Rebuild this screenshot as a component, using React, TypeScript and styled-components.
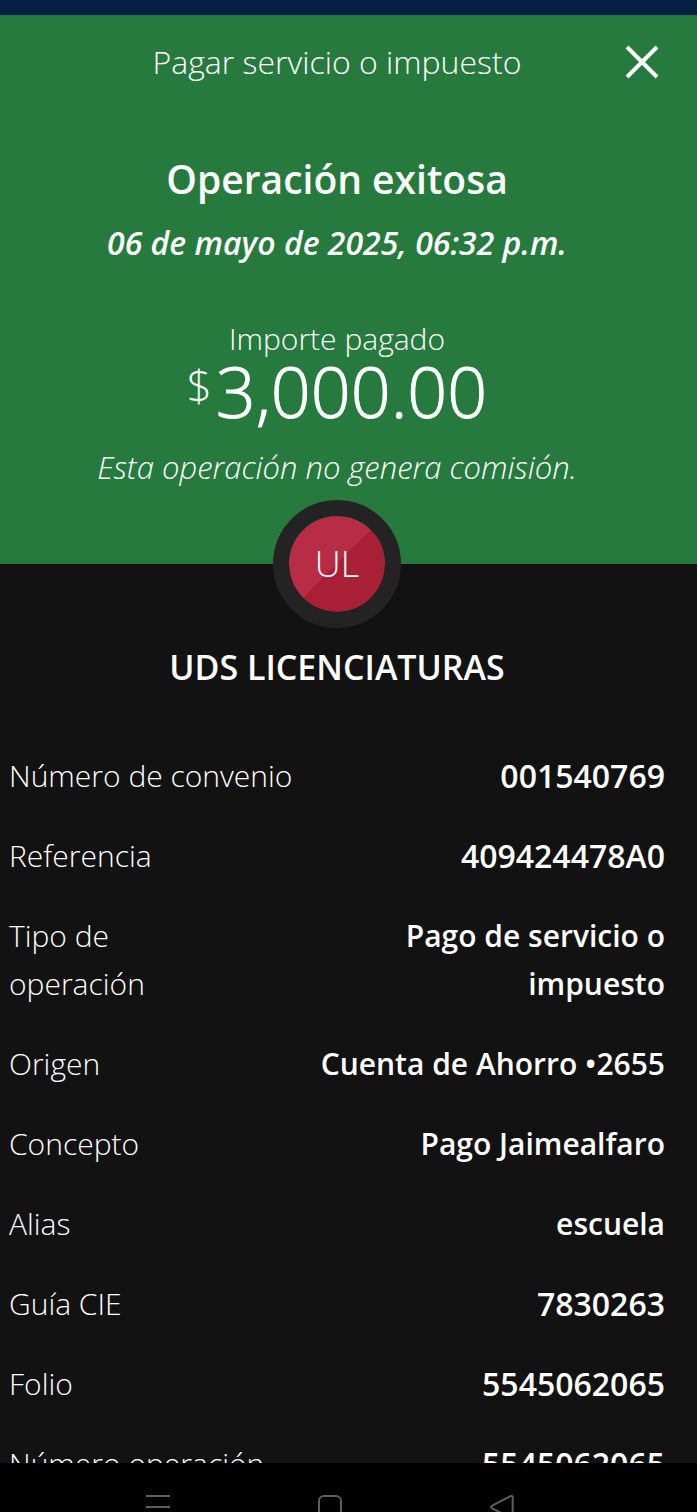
import React from 'react';
import styled, { createGlobalStyle } from 'styled-components';

const GlobalStyle = createGlobalStyle`
  *, *::before, *::after { box-sizing: border-box; }
  body {
    margin: 0;
    background: #121212;
    color: #ffffff;
    font-family: 'Open Sans', 'Noto Sans', sans-serif;
    font-weight: 300;
  }
  button { font: inherit; color: inherit; background: none; border: 0; padding: 0; cursor: pointer; }
  h1, h2, h3, p, dl, dd { margin: 0; }
`;

const Screen = styled.div`
  display: flex;
  flex-direction: column;
  height: 100vh;
`;

const StatusStrip = styled.div`
  flex: none;
  height: 15px;
  background: #062045;
`;

const Content = styled.main`
  flex: 1;
  min-height: 0;
  overflow-y: auto;
  scrollbar-width: none;
`;

const Hero = styled.section`
  display: flex;
  flex-direction: column;
  align-items: center;
  padding: 0 32px 0 9px;
  background: #277a3e;
  text-align: center;
`;

const TopBar = styled.header`
  display: grid;
  grid-template-columns: 46px 1fr 46px;
  align-items: center;
  align-self: stretch;
  height: 94px;
`;

const Title = styled.h1`
  grid-column: 2;
  font-size: 32px;
  line-height: 48px;
  font-weight: 300;
`;

const CloseButton = styled.button`
  display: flex;
  align-items: center;
  justify-content: center;
  width: 46px;
  height: 46px;
`;

const Status = styled.h2`
  margin-top: 42px;
  font-size: 39px;
  line-height: 56px;
  font-weight: 600;
`;

const DateLine = styled.p`
  margin-top: 12px;
  font-size: 32px;
  line-height: 48px;
  font-style: italic;
  font-weight: 600;
`;

const AmountLabel = styled.p`
  margin-top: 52px;
  font-size: 30px;
  line-height: 40px;
`;

const Amount = styled.p`
  display: flex;
  align-items: flex-start;
  gap: 4px;
  font-size: 70px;
  line-height: 64px;
`;

const Currency = styled.span`
  font-size: 44px;
  line-height: 52px;
`;

const Figure = styled.span`
  -webkit-text-stroke: 1px currentColor;
`;

const Fee = styled.p`
  margin-top: 20px;
  font-size: 31px;
  line-height: 48px;
  font-style: italic;
`;

const Avatar = styled.div`
  display: flex;
  align-items: center;
  justify-content: center;
  width: 128px;
  height: 128px;
  margin: 9px 0 -64px;
  border: 16px solid #232323;
  border-radius: 50%;
  background: linear-gradient(135deg, #b82c45 50%, #a91f35 50%) padding-box;
  font-size: 36px;
  line-height: 48px;
`;

const Details = styled.section`
  padding: 80px 32px 0 9px;
`;

const Payee = styled.h3`
  margin-bottom: 46px;
  font-size: 34px;
  line-height: 46px;
  font-weight: 600;
  text-align: center;
`;

const Row = styled.div`
  display: flex;
  justify-content: space-between;
  gap: 16px;
  padding: 16px 0;
  font-size: 30px;
  line-height: 48px;
`;

const Value = styled.dd<{ $code?: boolean }>`
  font-size: ${(p) => (p.$code ? 32 : 30)}px;
  font-weight: 600;
  text-align: right;
`;

const NavBar = styled.nav`
  flex: none;
  display: grid;
  grid-template-columns: repeat(3, 1fr);
  justify-items: center;
  align-items: start;
  height: 49px;
  padding: 32px 109px 0 72px;
  overflow: hidden;
  background: #000000;
  color: #5e5e5e;
`;

const NavButton = styled.button`
  display: flex;
  width: 24px;
  height: 24px;
`;

const rows = [
  { label: 'Número de convenio', value: '001540769', code: true },
  { label: 'Referencia', value: '409424478A0', code: true },
  { label: 'Tipo de operación', value: 'Pago de servicio o impuesto' },
  { label: 'Origen', value: 'Cuenta de Ahorro •2655' },
  { label: 'Concepto', value: 'Pago Jaimealfaro' },
  { label: 'Alias', value: 'escuela' },
  { label: 'Guía CIE', value: '7830263', code: true },
  { label: 'Folio', value: '5545062065', code: true },
  { label: 'Número operación', value: '5545062065', code: true },
];

export default function App() {
  return (
    <Screen>
      <GlobalStyle />
      <StatusStrip />
      <Content>
        <Hero>
          <TopBar>
            <Title>Pagar servicio o impuesto</Title>
            <CloseButton type="button" aria-label="Cerrar">
              <svg width="34" height="34" viewBox="0 0 34 34" fill="none" stroke="currentColor" strokeWidth="4">
                <path d="M2 2l30 30M32 2L2 32" />
              </svg>
            </CloseButton>
          </TopBar>
          <Status>Operación exitosa</Status>
          <DateLine>06 de mayo de 2025, 06:32 p.m.</DateLine>
          <AmountLabel>Importe pagado</AmountLabel>
          <Amount>
            <Currency>$</Currency>
            <Figure>3,000.00</Figure>
          </Amount>
          <Fee>Esta operación no genera comisión.</Fee>
          <Avatar>UL</Avatar>
        </Hero>
        <Details>
          <Payee>UDS LICENCIATURAS</Payee>
          <dl>
            {rows.map(({ label, value, code }) => (
              <Row key={label}>
                <dt>{label}</dt>
                <Value $code={code}>{value}</Value>
              </Row>
            ))}
          </dl>
        </Details>
      </Content>
      <NavBar>
        <NavButton type="button" aria-label="Recientes">
          <svg width="24" height="24" viewBox="0 0 24 24" fill="none" stroke="currentColor" strokeWidth="2">
            <path d="M0 1h24M0 12h24M0 23h24" />
          </svg>
        </NavButton>
        <NavButton type="button" aria-label="Inicio">
          <svg width="24" height="24" viewBox="0 0 24 24" fill="none" stroke="currentColor" strokeWidth="2">
            <rect x="1" y="1" width="22" height="22" rx="5" />
          </svg>
        </NavButton>
        <NavButton type="button" aria-label="Atrás">
          <svg width="24" height="24" viewBox="0 0 24 24" fill="none" stroke="currentColor" strokeWidth="2" strokeLinejoin="round">
            <path d="M20.500 1.200L2.200 10.600Q0 12 2.200 13.400L20.500 22.800Q22.700 23.500 22.700 21.500V2.500Q22.700 0.500 20.500 1.200Z" />
          </svg>
        </NavButton>
      </NavBar>
    </Screen>
  );
}
